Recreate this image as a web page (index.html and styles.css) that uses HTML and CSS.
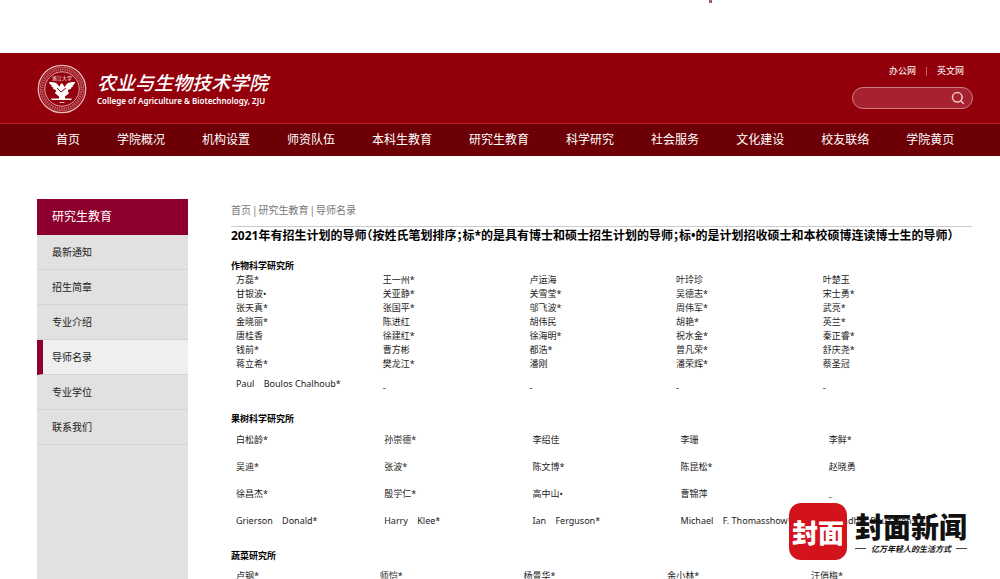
FILE: index.html
```html
<!DOCTYPE html>
<html lang="zh-CN">
<head>
<meta charset="utf-8">
<title>导师名录 - 农业与生物技术学院</title>
<link rel="stylesheet" href="styles.css">
</head>
<body>
<div class="topbar"><span class="marker"></span></div>
<header class="header">
  <div class="masthead">
    <a class="brand" href="#">
      <svg class="seal" viewBox="0 0 50 50" aria-hidden="true">
        <g fill="none" stroke="#e8b9bb">
          <circle cx="25" cy="25" r="23.7" stroke-width="1.3"/>
          <circle cx="25" cy="25" r="21.8" stroke-width=".5"/>
          <circle cx="25" cy="25" r="19.6" stroke-width="2.6" stroke-dasharray="1.5 .8" opacity=".5"/>
          <circle cx="25" cy="25" r="17.2" stroke-width=".9"/>
        </g>
        <text class="seal-text" x="25" y="16" text-anchor="middle">浙江大学</text>
        <path fill="#fff" d="M12 18c3 0 6 .3 8 1.700l2.500 3 1.200-2.700 1-.8 1.100.8 1.700 3 2.700-3.500c2-1.200 4.800-1.500 8-1.500-.5 1.800-1.500 2.800-2.800 3.500l1 .5-2.600 2 .5.700-3.500 1.400 1 3.500-3.800 2.900v2h6.500v1.500H14.500v-1.500H22v-2l-4-3.200 1.200-3-3.400-1.500.8-.8-2.700-2 1-.6C13.200 20.500 12.300 19.500 12 18z"/>
        <path stroke="#93000d" stroke-width="1" fill="none" d="M20 24l4 4 5-4"/>
        <path stroke="#e8b9bb" stroke-width="1" d="M22.500 38.500h5"/>
      </svg>
      <span class="brand-text">
        <span class="brand-cn">农业与生物技术学院</span>
        <span class="brand-en">College of Agriculture &amp; Biotechnology, ZJU</span>
      </span>
    </a>
    <div class="tools">
      <div class="links"><a href="#">办公网</a><span class="sep"></span><a href="#">英文网</a></div>
      <form class="search">
        <input class="search-input" type="text" aria-label="搜索">
        <button class="search-btn" type="button" aria-label="搜索">
          <svg viewBox="0 0 14 14" fill="none" stroke="#f0c8ca" stroke-width="1.500"><circle cx="6.300" cy="6.300" r="4.800"/><path d="M9.700 9.700l3 3"/></svg>
        </button>
      </form>
    </div>
  </div>
  <nav class="nav">
    <a href="#">首页</a><a href="#">学院概况</a><a href="#">机构设置</a><a href="#">师资队伍</a><a href="#">本科生教育</a><a href="#">研究生教育</a><a href="#">科学研究</a><a href="#">社会服务</a><a href="#">文化建设</a><a href="#">校友联络</a><a href="#">学院黄页</a>
  </nav>
</header>
<div class="page">
  <aside class="sidebar">
    <h2 class="side-title">研究生教育</h2>
    <a class="side-link" href="#">最新通知</a>
    <a class="side-link" href="#">招生简章</a>
    <a class="side-link" href="#">专业介绍</a>
    <a class="side-link active" href="#">导师名录</a>
    <a class="side-link" href="#">专业学位</a>
    <a class="side-link" href="#">联系我们</a>
  </aside>
  <main class="content">
    <div class="crumbs"><a href="#">首页</a><span>|</span><a href="#">研究生教育</a><span>|</span><a href="#">导师名录</a></div>
    <h1 class="title">2021年有招生计划的导师（按姓氏笔划排序；标*的是具有博士和硕士招生计划的导师；标•的是计划招收硕士和本校硕博连读博士生的导师）</h1>
    <h3 class="dept">作物科学研究所</h3>
    <table class="names crops">
      <tr><td>方磊*</td><td>王一州*</td><td>卢运海</td><td>叶玲珍</td><td>叶楚玉</td></tr>
      <tr><td>甘银波•</td><td>关亚静*</td><td>关雪莹*</td><td>吴德志*</td><td>宋士勇*</td></tr>
      <tr><td>张天真*</td><td>张国平*</td><td>邬飞波*</td><td>周伟军*</td><td>武亮*</td></tr>
      <tr><td>金晓丽*</td><td>陈进红</td><td>胡伟民</td><td>胡艳*</td><td>英兰*</td></tr>
      <tr><td>唐桂香</td><td>徐建红*</td><td>徐海明*</td><td>祝水金*</td><td>秦正睿*</td></tr>
      <tr><td>钱前*</td><td>曹方彬</td><td>都浩*</td><td>曾凡荣*</td><td>舒庆尧*</td></tr>
      <tr><td>蒋立希*</td><td>樊龙江*</td><td>潘刚</td><td>潘荣辉*</td><td>蔡圣冠</td></tr>
      <tr class="last"><td>Paul    Boulos Chalhoub*</td><td class="dash">-</td><td class="dash">-</td><td class="dash">-</td><td class="dash">-</td></tr>
    </table>
    <h3 class="dept">果树科学研究所</h3>
    <table class="names fruit">
      <tr><td>白松龄*</td><td>孙崇德*</td><td>李绍佳</td><td>李珊</td><td>李鲜*</td></tr>
      <tr><td>吴迪*</td><td>张波*</td><td>陈文博*</td><td>陈昆松*</td><td>赵晓勇</td></tr>
      <tr><td>徐昌杰*</td><td>殷学仁*</td><td>高中山•</td><td>曹锦萍</td><td class="dash">-</td></tr>
      <tr><td>Grierson    Donald*</td><td>Harry    Klee*</td><td>Ian    Ferguson*</td><td>Michael    F. Thomasshow*</td><td>Mondher Bouzayen*</td></tr>
    </table>
    <h3 class="dept">蔬菜研究所</h3>
    <table class="names veg">
      <tr><td>卢钢*</td><td>师恺*</td><td>杨景华*</td><td>余小林*</td><td>汪俏梅*</td></tr>
    </table>
  </main>
</div>
<div class="watermark">
  <span class="wm-badge">封面</span>
  <span class="wm-text"><span class="wm-name">封面新闻</span><span class="wm-tag">亿万年轻人的生活方式</span></span>
</div>
</body>
</html>
```
FILE: styles.css
```css
* { box-sizing: border-box; }
html { height: 100%; scrollbar-width: none; }
body {
  position: relative;
  display: flex;
  flex-direction: column;
  min-height: 100%;
  margin: 0;
  background: #fff;
  color: #222;
  font: 10px/14px "Noto Sans", "Noto Sans CJK SC", sans-serif;
}
a { color: inherit; text-decoration: none; }
h1, h2, h3 { margin: 0; }

.topbar { position: relative; height: 53px; }
.marker { position: absolute; left: 71%; top: 0; width: 3px; height: 3px; margin-left: -1px; background: #b0557a; }

.header { background: #93000b; color: #fff; }
.masthead { display: flex; justify-content: space-between; padding: 11px 27px 9px 37px; }
.brand { display: flex; align-items: center; gap: 10px; }
.seal { width: 50px; height: 50px; }
.seal-text { font: 5px "Noto Sans CJK SC", sans-serif; fill: #fff; }
.brand-text { display: flex; flex-direction: column; padding-bottom: 3px; }
.brand-cn { font: italic 500 19px/26px "Noto Sans CJK SC", sans-serif; white-space: nowrap; }
.brand-en { font: 600 8px/12px "Noto Sans", sans-serif; white-space: nowrap; }

.tools { display: flex; flex-direction: column; align-items: flex-end; gap: 9px; }
.links { display: flex; align-items: center; gap: 10px; padding-right: 9px; font-size: 9px; }
.sep { width: 1px; height: 9px; background: #d0605c; }
.search {
  display: flex;
  align-items: center;
  width: 121px;
  height: 22px;
  padding: 0 7px;
  border: 1px solid #cf7f84;
  border-radius: 11px;
  background: #a62230;
}
.search-input { flex: 1; min-width: 0; border: 0; padding: 0; background: none; color: #fff; font: inherit; outline: 0; }
.search-btn { display: flex; width: 14px; height: 14px; border: 0; padding: 0; background: none; }
.search-btn svg { width: 14px; height: 14px; }

.nav {
  display: flex;
  gap: 37px;
  padding: 0 48px 0 56px;
  border-top: 1px solid #b01c20;
  background: #6d0006;
  font-size: 12px;
  line-height: 32px;
  white-space: nowrap;
}

.page { display: flex; flex: 1; gap: 43px; padding: 43px 28px 0 37px; }
.sidebar { flex: none; width: 151px; background: #e1e1e1; }
.side-title { padding-left: 15px; background: #8d002d; color: #fff; font-size: 12px; font-weight: 400; line-height: 36px; }
.side-link { display: block; padding-left: 15px; border-bottom: 1px solid #d3d3d3; line-height: 34px; }
.side-link.active { padding-left: 9px; border-left: 6px solid #8d002d; background: #efefef; }

.content { flex: 1; min-width: 0; padding-top: 4px; }
.crumbs { display: flex; gap: 1px; padding-bottom: 9px; border-bottom: 1px solid #ccc; color: #777; }
.title {
  color: #000;
  font-size: 12px;
  font-weight: 700;
  line-height: 18px;
  font-feature-settings: "halt";
  white-space: nowrap;
}
.dept { color: #000; font-size: 9px; font-weight: 700; line-height: 14px; }
.title + .dept { margin-top: 14px; }
.names { width: 100%; border-collapse: collapse; table-layout: fixed; font-size: 9px; line-height: 14px; }
.names td { padding: 0 0 0 5px; white-space: pre; }
.names .dash { padding-top: 7px; }
.crops { width: 99%; margin-bottom: 15px; }
.crops .last td { height: 26px; }
.fruit { margin-bottom: 15px; }
.fruit td { height: 27px; }
.veg { width: 97%; margin-top: 6px; }

.watermark { position: absolute; left: 789px; top: 503px; display: flex; align-items: center; gap: 8px; }
.wm-badge {
  width: 58px;
  border-radius: 12px;
  background: #d3131b;
  color: #fff;
  font: 900 26px/57px "Noto Sans CJK SC", sans-serif;
  text-align: center;
}
.wm-text { display: flex; flex-direction: column; color: #111; }
.wm-name { font: 900 28px/34px "Noto Sans CJK SC", sans-serif; }
.wm-tag { display: flex; align-items: center; justify-content: space-between; font: italic 700 8px/12px "Noto Sans CJK SC", sans-serif; }
.wm-tag::before, .wm-tag::after { content: ""; width: 11px; height: 1px; background: #444; }
```
